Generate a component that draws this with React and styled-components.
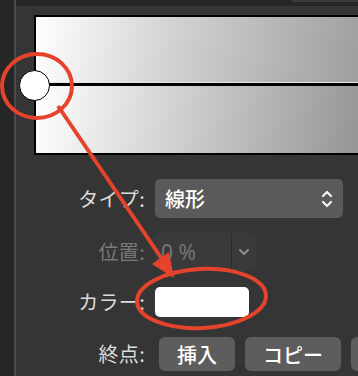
import React from "react";
import styled, { createGlobalStyle } from "styled-components";

const Global = createGlobalStyle`
  html, body { margin: 0; padding: 0; background: #353535; }
  body { font-family: "Noto Sans CJK JP", "Noto Sans", sans-serif; }
  #root { width: 358px; height: 376px; overflow: hidden; position: relative; }
`;

const Page = styled.div`
  display: flex;
  width: 358px;
  height: 376px;
  overflow: hidden;
  position: relative;
  background: #353535;
`;

const Rail = styled.div`
  width: 14px;
  flex: none;
  background: #262626;
  border-right: 2px solid #4a4a4a;
`;

const Main = styled.div`
  flex: 1;
  display: flex;
  flex-direction: column;
  min-width: 0;
`;

const TopStrip = styled.div`
  height: 6px;
  flex: none;
  background: #262626;
  display: flex;
  justify-content: flex-end;
`;

const TopStub = styled.div`
  width: 66px;
  height: 2px;
  background: #3c3c3c;
  border-bottom-left-radius: 3px;
`;

const GradientWrap = styled.div`
  position: relative;
  margin: 9px 0 0 18px;
  width: 340px;
  flex: none;
`;

const GradientBox = styled.div`
  display: flex;
  flex-direction: column;
  border: 2px solid #000;
  border-right: none;
`;

const Half = styled.div`
  height: ${(p) => p.$h}px;
  background: linear-gradient(
    ${(p) => p.$angle}deg,
    #ffffff 0%,
    #d0d0d0 42%,
    ${(p) => p.$end} 100%
  );
`;

const Divider = styled.div`
  height: 3px;
  background: #000;
  border-top: 1px solid #e6e6e6;
`;

const Handle = styled.div`
  position: absolute;
  left: -15px;
  top: 55px;
  width: 29px;
  height: 29px;
  border-radius: 50%;
  background: #fff;
  border: 1.5px solid #000;
`;

const Form = styled.div`
  display: flex;
  flex-direction: column;
`;

const Row = styled.div`
  display: flex;
  align-items: center;
  gap: 10px;
  height: ${(p) => p.$h}px;
  margin-top: ${(p) => p.$mt}px;
`;

const Label = styled.div`
  width: 129px;
  flex: none;
  text-align: right;
  font-size: 20px;
  line-height: 1;
  letter-spacing: 0.3px;
  color: ${(p) => (p.$dim ? "#787878" : "#dcdcdc")};
  white-space: nowrap;
`;

const Select = styled.div`
  width: 188px;
  height: 39px;
  box-sizing: border-box;
  border-radius: 5px;
  background: #5a5a5a;
  display: flex;
  align-items: center;
  justify-content: space-between;
  padding: 0 10px 0 10px;
  color: #fff;
  font-size: 20px;
  font-weight: 500;
`;

const NumField = styled.div`
  display: flex;
  height: 37px;
  border-radius: 5px;
  overflow: hidden;
  background: #3a3a3a;
`;

const NumValue = styled.div`
  width: 70px;
  display: flex;
  align-items: center;
  padding-left: 6px;
  color: #777;
  font-size: 21px;
  font-family: "Noto Sans", sans-serif;
  border-right: 1px solid #2c2c2c;
`;

const Stepper = styled.div`
  width: 24px;
  display: flex;
  align-items: center;
  justify-content: center;
`;

const ColorWell = styled.div`
  width: 94px;
  height: 30px;
  border-radius: 5px;
  background: #fff;
`;

const Buttons = styled.div`
  display: flex;
  gap: 10px;
  margin-left: 4px;
`;

const Button = styled.div`
  width: ${(p) => p.$w}px;
  height: 34px;
  flex: none;
  border-radius: 6px;
  background: #5d5d5d;
  color: #fff;
  font-size: 20px;
  font-weight: 500;
  display: flex;
  align-items: center;
  justify-content: center;
`;

const Overlay = styled.svg`
  position: absolute;
  left: 0;
  top: 0;
  width: 358px;
  height: 376px;
  pointer-events: none;
`;

const Updown = () => (
  <svg width="12" height="20" viewBox="0 0 12 20" fill="none">
    <path d="M2 7 L6 3 L10 7" stroke="#f2f2f2" strokeWidth="2.2" strokeLinecap="round" strokeLinejoin="round" />
    <path d="M2 13 L6 17 L10 13" stroke="#f2f2f2" strokeWidth="2.2" strokeLinecap="round" strokeLinejoin="round" />
  </svg>
);

const Down = () => (
  <svg width="12" height="8" viewBox="0 0 12 8" fill="none">
    <path d="M2 2 L6 6 L10 2" stroke="#8a8a8a" strokeWidth="2.2" strokeLinecap="round" strokeLinejoin="round" />
  </svg>
);

export default function App() {
  const red = "#e5432b";
  return (
    <Page>
      <Global />
      <Rail />
      <Main>
        <TopStrip>
          <TopStub />
        </TopStrip>
        <GradientWrap>
          <GradientBox>
            <Half $h={65} $angle={100} $end="#9a9a9a" />
            <Divider />
            <Half $h={67} $angle={100} $end="#909090" />
          </GradientBox>
          <Handle />
        </GradientWrap>
        <Form>
          <Row $h={39} $mt={24}>
            <Label>タイプ:</Label>
            <Select>
              <span>線形</span>
              <Updown />
            </Select>
          </Row>
          <Row $h={37} $mt={15}>
            <Label $dim>位置:</Label>
            <NumField>
              <NumValue>0 %</NumValue>
              <Stepper>
                <Down />
              </Stepper>
            </NumField>
          </Row>
          <Row $h={30} $mt={17}>
            <Label>カラー:</Label>
            <ColorWell />
          </Row>
          <Row $h={34} $mt={20}>
            <Label>終点:</Label>
            <Buttons>
              <Button $w={76}>挿入</Button>
              <Button $w={96}>コピー</Button>
              <Button $w={60} />
            </Buttons>
          </Row>
        </Form>
      </Main>
      <Overlay viewBox="0 0 358 376">
        <ellipse cx="37" cy="86" rx="35" ry="32" fill="none" stroke={red} strokeWidth="4" />
        <ellipse
          cx="201.5"
          cy="298.5"
          rx="64.5"
          ry="29.5"
          fill="none"
          stroke={red}
          strokeWidth="4"
          transform="rotate(-3 201.5 298.5)"
        />
        <line x1="58" y1="106" x2="162" y2="259" stroke={red} strokeWidth="4" />
        <polygon points="174,278 152,264 169,252" fill={red} />
      </Overlay>
    </Page>
  );
}
